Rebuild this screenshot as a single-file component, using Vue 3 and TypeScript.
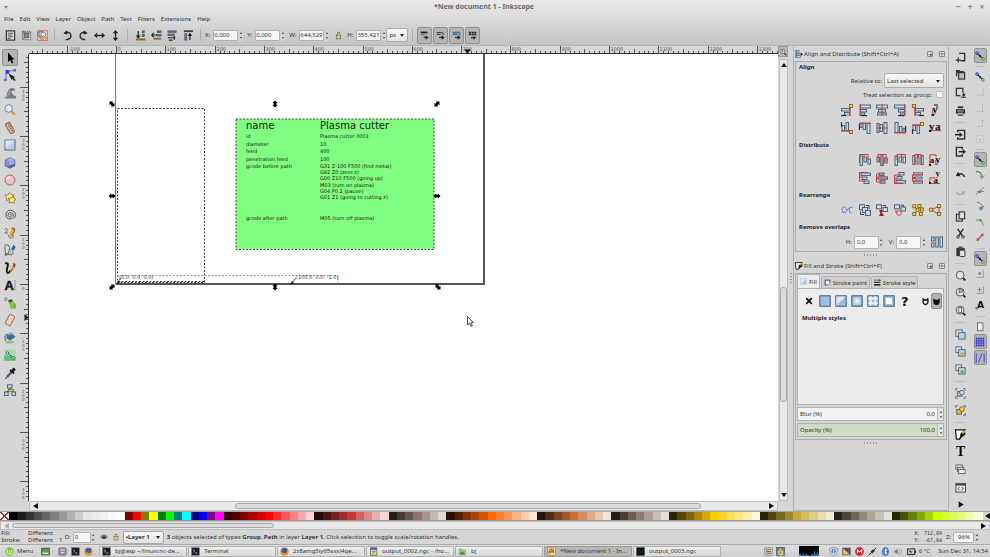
<script setup lang="ts">
import { h, ref } from 'vue'

/* ---- drawing helpers: every icon lives in a 12 x 12 box ---- */
const bar = (x: number, y: number, w: number, ht: number, fill = '#c3dbef') =>
  `<rect x="${x}" y="${y}" width="${w}" height="${ht}" fill="${fill}" stroke="#435869" stroke-width=".9"/>`
const red = (d: string) => `<path d="${d}" fill="none" stroke="#d8343c" stroke-width="1"/>`
const line = (d: string, color = '#2c2f31', width = 1.2) =>
  `<path d="${d}" fill="none" stroke="${color}" stroke-width="${width}"/>`
const solid = (d: string, color = '#1c1e20') => `<path d="${d}" fill="${color}"/>`
const gold = (x: number, y: number) =>
  `<rect x="${x}" y="${y}" width="3" height="3" fill="#ffd83a" stroke="#6d5612" stroke-width=".8"/>`
const turn = (deg: number, body: string) => `<g transform="rotate(${deg} 6 6)">${body}</g>`
const flip = (body: string) => `<g transform="matrix(-1 0 0 1 12 0)">${body}</g>`
const glyph = (x: number, y: number, size: number, s: string) =>
  `<text x="${x}" y="${y}" font-family="Liberation Serif, serif" font-weight="bold" font-size="${size}" fill="#111">${s}</text>`
const dot = (x: number, y: number, r: number, fill: string, stroke = 'none') =>
  `<circle cx="${x}" cy="${y}" r="${r}" fill="${fill}" stroke="${stroke}" stroke-width=".9"/>`

const anchorEdge = bar(0.5, 4.5, 8, 2.5) + bar(3.5, 8.5, 5, 2.5) + line('M0 11.5H5') + red('M9.2 2V12') + gold(8.5, 0.5)
const leftEdge = bar(1.5, 1, 10, 3) + bar(1.5, 5.5, 6, 2.5) + bar(1.5, 9, 4, 2) + red('M1 0V12') + line('M2 11.6H8')
const centreEdge = bar(0.5, 1, 11, 3) + bar(2.5, 5.5, 7, 2.5) + bar(1.5, 9, 9, 2) + red('M6 0V12')
const distA = bar(1, 2, 2.5, 9.5) + bar(5, 3, 2.5, 5) + bar(9, 5, 2.5, 5) + red('M0.5 9V.5H9V6M5 .5V3')
const distB = bar(1, 3, 2.5, 5) + bar(4.8, 2, 2.5, 9.5) + bar(8.7, 4, 2.5, 5) + red('M2 8V.5H10V8M6 .5V11')
const distC = bar(1, 2, 2.5, 9.5) + bar(5, 3, 2.5, 5) + bar(9, 3, 2.5, 6) + red('M3 6V.5H11.5V7M7.5 .5V5')
const distD = bar(0.8, 1.5, 2, 9) + bar(5, 3, 2, 7) + bar(9.2, 1.5, 2, 9) + red('M3 11V.5H9V11M5.5 .5V4M6.5 .5V4')
const link = line('M3 3L9 9', '#333', 1.4) + dot(2.5, 2.5, 1.7, '#7d86ff', '#2630d6') + dot(9.5, 9.5, 1.7, '#9fdcaa', '#278543') + dot(6, 6, 1.3, '#222')
const swatchBox = (inner: string) => `<rect x=".8" y=".8" width="10.4" height="10.4" fill="#9dbede" stroke="#3d5e7e"/>${inner}`
const magnifier = (inner: string) => line('M8.3 8.3L11.3 11.3', '#222', 2) + dot(5.6, 5.6, 4.3, '#dceaf5', '#38424a') + inner
const terminal = `<rect x="1" y="1" width="10" height="10" fill="#1d1d2a" stroke="#555" stroke-width=".6"/>` + line('M3 3.5L5 5.2L3 7M5.5 8H8.5', '#ddd', 1)
const fox = dot(6, 6, 5.4, '#e57b12') + dot(6, 4.8, 3.5, '#2b5fb0') + solid('M1 4C2 8 5 7 6 8.5C9 8 10 6 10 3C12 8 10 11 6 11.4C2 11 0 8 1 4Z', '#f3921c')

const icons: Record<string, string> = {
  // selection commands
  layers: `<rect x="1.5" y="1" width="9" height="10" fill="#e8e8e8" stroke="#333" stroke-width="1.3"/>` + line('M3 3.5H9M3 5.5H8M3 7.5H9M3 9.2H6', '#333', 0.9),
  all: `<rect x="1.5" y="1.5" width="9" height="9" fill="#ddd" stroke="#555" stroke-dasharray="1.5 1"/>` + bar(4, 3.5, 4.5, 5, '#888') + line('M1 3H11M3.2 1V11', '#666', 0.8),
  deselect: `<rect x=".8" y=".8" width="10.4" height="10.4" fill="#efdada" stroke="#dc5b5b" stroke-width="1"/>` + bar(2, 2, 5, 5, '#b5d1ea') + dot(7, 5, 2.5, '#edf4f8', '#777') + dot(5, 8.4, 1.8, '#f1b534', '#9b7721') + line('M8.7 7.5L10.5 10', '#c98a2a', 1.3),
  ccw: line('M4 10.5C8 11 10.5 8 9.5 5C8.5 2.5 6 2 3 3.2', '#2b2b2b', 1.5) + solid('M5.2 .5L1.5 3.7L6 5Z'),
  cw: line('M8 10.5C4 11 1.5 8 2.5 5C3.5 2.5 6 2 9 3.2', '#2b2b2b', 1.5) + solid('M6.8 .5L10.5 3.7L6 5Z'),
  fliph: line('M2 6H10', '#222', 1.4) + solid('M0 6L3.5 3V9ZM12 6L8.5 3V9Z'),
  flipv: line('M6 2V10', '#222', 1.4) + solid('M6 0L3 3.5H9ZM6 12L3 8.5H9Z'),
  bottom: line('M3.5 1V8', '#222', 1.3) + solid('M1 6L3.5 9.5L6 6Z') + bar(8, 1, 2, 2, '#777') + bar(8, 5, 2, 2, '#777') + line('M1 10.3H11.5', '#8a6a24', 2.2),
  lower: line('M5 5.5H1M3 3L.8 5.5L3 8', '#222', 1.2) + bar(7, 1, 4, 1.6, '#777') + bar(5.5, 5, 5.5, 1.5, '#777') + line('M3 9.5H11', '#8a6a24', 2),
  raise: bar(1, 1, 9, 1.5, '#777') + bar(1, 4.5, 7, 1.5, '#777') + line('M1 8.5H6M9 8.5H5M8 6.5V10.5M2 11H6', '#222', 1.2),
  top: line('M1 1.3H11', '#3b3b3b', 2) + bar(2, 4, 2, 7, '#777') + line('M7.5 4V11', '#222', 1.4) + solid('M5 6.5L7.5 3L10 6.5Z'),
  lock: `<rect x="3" y="5.5" width="6" height="5" fill="#e8cf6a" stroke="#555" stroke-width=".8"/>` + line('M4.5 5.5V3.5C4.5 1.5 8 1.2 8.2 3.5', '#555', 1.2),
  scaleStroke: line('M1 2H10', '#222', 2.4) + line('M1 5H6', '#555', 1.2) + line('M5 8.5H10', '#222', 1.5) + solid('M7.5 5.5L11.5 8.5L7.5 11.5Z'),
  scaleCorner: line('M1 2H7Q10 2 10 5M1 4.5H6', '#444', 1.5) + line('M4 8.5H9', '#222', 1.5) + solid('M7.5 5.5L11.5 8.5L7.5 11.5Z'),
  scaleGrad: line('M1 2H10V6M1 4.5H7', '#3c6b9c', 1.8) + line('M4 8.5H9', '#222', 1.5) + solid('M7.5 5.5L11.5 8.5L7.5 11.5Z'),
  scalePattern: line('M1 2H11M1 4.6H11', '#222', 2.2).replace('/>', ' stroke-dasharray="3 .7"/>') + line('M4 9H9', '#222', 1.5) + solid('M7.5 6.3L11 9L7.5 11.7Z'),

  // toolbox
  select: solid('M4 .5V10L6.2 8L7.7 11.5L9.3 10.7L7.8 7.5H10.5Z', '#000'),
  node: line('M2 11V5Q2 1.5 11 1.5', '#777', 1) + `<rect x="0" y="9.5" width="2.6" height="2.6" fill="#5b64ff"/><rect x="9.4" y="0" width="2.6" height="2.6" fill="#5b64ff"/><rect x="1.5" y="1" width="3.8" height="3.8" fill="#2f3cf0"/>` + solid('M4.5 4.5L11 8L9.5 8.8L11.7 11L10.6 12L8.5 9.9L7.5 11Z'),
  tweak: solid('M0 11.5Q3 9 3.5 5Q5 .5 9.5 1.2Q11.5 2 11 4.5Q9 2.5 7.5 4.5Q7.5 7.5 12 9.5V11.5Z', '#777a7c') + line('M1 10Q5 10 6 3', '#b8bcbe', 1),
  zoom: line('M7.5 7.5L11 11', '#e8a120', 2.4) + dot(4.7, 4.5, 3.8, '#d6e9f8', '#6c7d8b') + line('M2.5 4Q3 2.2 5 2', '#fff', 1),
  measure: `<g transform="rotate(-30 6 6)"><rect x="3.5" y=".5" width="5" height="11" rx="1" fill="#d8ac98" stroke="#7d5c4e" stroke-width=".9"/></g>` + line('M4 3L5.5 2.3M5 5L7 4M6 7L7.5 6.3M7 9L9 8', '#6a4638', 0.8),
  rect: `<rect x="1" y="1" width="10" height="10" fill="#b9d2ea" stroke="#5b6d7e"/>` + solid('M1.6 1.6H10.4L1.6 9Z', '#d9e8f5'),
  box: solid('M6 .3L11.2 2.8V9L6 11.8L.8 9V2.8Z', '#5c60a8') + solid('M6 .9L10.6 3L6.5 5.2L1.4 3Z', '#b9bce8') + solid('M1.4 3.3L4.5 2V9.2L1.4 8.8Z', '#8b90d2') + solid('M4.7 2L10.4 3.5V7L4.7 8.6Z', '#a6aaea'),
  ellipse: dot(6, 6, 5, '#f9bcc4', '#8d6468') + solid('M2 6A4 4 0 0 1 8 2.6Q5 5 2 6Z', '#fcdde0'),
  star: `<path d="M1 3L4 3L5.5 .5L7 2.5L10 3L8.5 5.5L9 8L5.5 7.5L2.5 8.5L2.5 5.5Z" fill="#f3ea9a" stroke="#7d7535" stroke-width=".8"/><path d="M4.5 6L7.5 6L9 3.8L9.8 6.3L12 7.3L10 8.8L10 11.5L7.5 10L5 11L5.5 8.5Z" fill="#fdeb62" stroke="#7d7535" stroke-width=".8"/>`,
  spiral: line('M6 6Q7 5 7.5 6.2Q7.3 8.3 5.2 7.8Q3.2 6.5 4.5 4.4Q6.8 2.6 9 4.7Q10.5 8 7.5 9.8Q3.8 10.8 2 7.5Q1 3.5 4.5 1.5Q9 .2 11.2 4Q11.8 7 10.5 9.5', '#54585b', 1),
  pencil: line('M.5 2.5Q3 .5 3.5 2.5Q3.5 4 .8 6H4M4 8Q5 11.5 7.5 11.3Q10 11 9 8', '#666', 0.9) + solid('M8 1L11 2.5L7.5 9.5L5 10.5L5.2 8Z', '#f0a82a') + line('M8 1L11 2.5', '#d04a2a', 1.6) + line('M11 3L7.8 9', '#6a4a12', 0.8),
  pen: line('M.5 1H4Q7 2 4 10H1.5L.8 2.5M4 10.5Q8 12 10 9', '#555', 0.9) + dot(2, 10.5, 1, '#eee', '#444') + solid('M9.5 .8L11.8 3L8.5 8.5L5.8 10L6.5 6Z', '#3e6c9e') + solid('M7 5L9 7L5.5 10.5Z', '#e3d3a0'),
  calligraphy: line('M1 1.5Q5 0 3.5 5Q2 10 3.5 10.8Q5 11.5 7 8', '#111', 2) + solid('M9.5 .5L11.8 2.5L10.3 6L8.5 5Z', '#b43a20') + solid('M7 4L10.5 6L9.5 9L5.8 11Z', '#e8c255') + line('M9 6.5L6 10.5', '#222', 0.8),
  text: `<text x="0.5" y="10.5" font-family="Liberation Sans, sans-serif" font-weight="bold" font-size="13" fill="#16181a" stroke="#16181a" stroke-width=".5">A</text>` + line('M11 1V11', '#777', 0.7),
  spray: solid('M5 5L8.5 3L11.8 7.5V11.5H6.5Z', '#6bb028') + line('M7 5.5V10.5M9 5V11', '#a9dd74', 0.9) + solid('M4 3.5L7.5 2L8.5 4L5 5.5Z', '#444') + dot(1, 1.2, 0.7, '#555') + dot(3, 1, 0.6, '#555') + dot(1, 3.4, 0.7, '#555') + dot(2.6, 2.7, 0.6, '#555'),
  eraser: `<g transform="rotate(28 6 6)"><rect x="3.2" y=".8" width="5.6" height="10.4" rx=".8" fill="#f3cdb9" stroke="#8a6e62" stroke-width=".9"/></g>`,
  bucket: solid('M1 10Q6 7.5 11 10Q9 12 5 11.8Q1.5 11.5 1 10Z', '#7cc09a') + solid('M3 2L8 .5L11.5 5L6 8.5L2.5 6.5Z', '#3a6d95') + line('M2.8 2Q0 4 1.5 9', '#555', 1) + line('M4 2.5L9 1.5L10.5 4', '#9cc4df', 1.2),
  gradient: `<rect x=".3" y=".3" width="11.4" height="11.4" fill="#a7dcae"/>` + solid('M.3 11.7V6L11.7 8V11.7Z', '#66bb78') + line('M4 4.5L9 8.5', '#355', 0.9) + dot(3.5, 4, 1.3, '#e6f5e8', '#466') + dot(9.2, 8.8, 1.3, '#e6f5e8', '#466'),
  dropper: line('M8.5 4L3 10', '#4b5f75', 2.4) + line('M3 10L1.2 12', '#333', 1) + line('M6 3L10 6.5', '#111', 1.8) + line('M8.5 4L10.7 1.5', '#111', 3),
  connector: line('M6 4V6.5M2.5 8L5 6.5M9.5 8L7 6.5', '#444', 1.1) + bar(3.5, 0.8, 4.5, 3.2) + bar(0.5, 8, 3.6, 3.4) + bar(8, 8, 3.6, 3.4) + `<rect x="4.5" y="5.4" width="5" height="1.8" fill="#f7d53c" stroke="#6a5a14" stroke-width=".6"/>`,

  // align and distribute
  a1: anchorEdge, a2: leftEdge, a3: centreEdge, a4: flip(leftEdge), a5: flip(anchorEdge),
  a6: line('M5 1H8V4', '#456', 1.4) + glyph(3.2, 8.5, 11, 'y') + red('M3.8 5V12') + solid('M2.5 10.2H5V12H2.5Z'),
  b1: turn(90, anchorEdge), b2: turn(90, leftEdge), b3: turn(90, centreEdge), b4: turn(-90, leftEdge), b5: turn(90, flip(anchorEdge)),
  b6: glyph(0, 8, 11, 'y') + glyph(6, 8, 11, 'a') + red('M0 8.6H12') + solid('M0 7.8H2V10H0Z'),
  d1: distA, d2: distB, d3: distC, d4: distD, d5: glyph(0.8, 8.5, 9, 'a') + glyph(6.3, 8.5, 10, 'y') + red('M.8 11V.8H7V3M6.8 6V11') + solid('M0 10H2V12H0Z'),
  e1: turn(-90, flip(distA)), e2: turn(-90, flip(distB)), e3: turn(-90, distA), e4: turn(-90, distD), e5: glyph(6.5, 4, 9, 'y') + glyph(4.5, 11, 9, 'a') + red('M6 5.8H.8V11.5H11') + solid('M0 10H2V12H0Z'),
  r1: line('M6 6L3.5 2.5L.8 4.5L1.8 8.5H4.5L6 6L8 4L8.5 8L11 9.5M8 4L11.5 3', '#6c80cc', 1),
  r2: bar(0.5, 0.8, 5, 5) + bar(3.5, 3.5, 5, 5) + bar(6.5, 6.5, 5, 5) + line('M7 1.5H10V5M1.5 7.5V10.5H5', '#444', 1),
  r3: bar(0.5, 0.8, 5, 4) + bar(7, 3.5, 4.5, 4) + line('M6.5 1.5H9.5V3', '#444', 1) + solid('M3 6H7L6 8.5L8 12H3L4.5 9Z', '#96202a'),
  r4: bar(0.5, 0.8, 5, 4) + bar(7, 3, 4.5, 4) + line('M6.5 1.2H9.5V3', '#444', 1) + dot(5, 9, 2.3, 'none', '#d8343c') + red('M2 6V9'),
  r5: gold(0.8, 0.8) + gold(6, 0.5) + gold(4, 4.3) + gold(8.5, 4) + gold(0.8, 8.5) + gold(7.3, 8.5),
  r6: red('M2.5 6L10 2M2.5 6L10 10.5M10 2V10') + gold(0.6, 4.2) + gold(8.4, 0.6) + gold(8.4, 8.4),
  overlap: bar(0.6, 1, 2.5, 4) + bar(0.6, 7, 2.5, 4) + bar(4.8, 1, 2.5, 10) + bar(9, 0.8, 2.5, 10.4),
  alignTitle: red('M1 0V12') + bar(2, 1, 4, 3) + bar(2, 5, 7, 2.5) + bar(2, 8.5, 6, 2.5) + solid('M9 4L12 6.2L9 8.5Z'),
  fillTitle: `<path d="M.5 1H11L5 11H1.5Z" fill="#fff" stroke="#111" stroke-width="1.3"/>` + solid('M6 5L10.5 1L11.5 6L5 11Z', '#111') + line('M8 5L11.5 1.5', '#e6a82c', 2),

  // paint kinds
  none: line('M3.2 3.2L8.8 8.8M8.8 3.2L3.2 8.8', '#111', 1.7),
  flat: swatchBox(''),
  linear: swatchBox(solid('M1.4 1.4H10.6L1.4 10.6Z', '#dce8f4')),
  radial: swatchBox(dot(6, 6, 3.8, '#c3d8ec') + dot(6, 6, 1.8, '#edf4fa')),
  pattern: swatchBox(line('M3.5 1.2V10.8M8.5 1.2V10.8M1.2 3.5H10.8M1.2 8.5H10.8', '#eef5fb', 2)),
  paintbox: swatchBox(`<rect x="3" y="3" width="6" height="6" fill="#fdfdfd"/>`),
  unknown: `<text x="2" y="10.5" font-family="DejaVu Sans, sans-serif" font-weight="bold" font-size="13" fill="#111">?</text>`,
  evenodd: `<path d="M3 2.5L4.5 4H7.5L9 2.5Q10.5 10 6 10Q1.5 10 3 2.5Z" fill="none" stroke="#111" stroke-width="1.8"/>`,
  nonzero: solid('M2 1.5L4.5 3.5H7.5L10 1.5Q12 10.7 6 10.7Q0 10.7 2 1.5Z', '#111'),
  tabFill: bar(1, 1, 10, 10, '#a9c8e6').replace('#435869', '#b7cde2') + solid('M1.5 1.5H10.5L1.5 10.5Z', '#dbe7f3'),
  tabPaint: `<rect x="2" y="2" width="8" height="8" fill="#f4f4f4" stroke="#567" stroke-width="2"/>` + line('M6 10H10V6', '#ccc', 2.4),
  tabStyle: line('M0 2H11', '#222', 1) + line('M0 5.7H11', '#222', 1.8) + line('M0 10H11', '#222', 2.6) + solid('M9 .5L12 2L9 3.5Z'),

  // commands
  newdoc: line('M4.5 1.5H10.5V9.5H6', '#333', 1.5) + line('M3.5 6V11.5M.8 8.8H6.2', '#333', 1.3),
  open: `<rect x="4" y="4" width="6.5" height="7" fill="#bbb" stroke="#333" stroke-width="1.3"/>` + solid('M1 1H5L6 2.3H10V4H2.5V8H1Z', '#333'),
  save: line('M6 9.5H1.5V1.5H8.5V6', '#333', 1.4) + line('M9.5 6V10M6.5 11.2H12', '#333', 1.3) + solid('M7.5 8H11.5L9.5 10.8Z'),
  print: solid('M1 4.5H11V9.5H1Z', '#333') + line('M3 2.5H9', '#333', 2) + line('M2.5 6.5H9.5M3 9H9', '#ccc', 1) + line('M3 11H9', '#333', 1.4),
  import: line('M3 3.5V1.5H10.5V11H3V9', '#333', 1.6) + line('M0 6.2H6', '#222', 1.6) + solid('M5 3.5L8.5 6.2L5 9Z'),
  export: line('M8 3.5V1.5H1.5V11H8V9', '#333', 1.6) + line('M4 6.2H9', '#222', 1.6) + solid('M8.5 3.5L12 6.2L8.5 9Z'),
  undo: line('M3 5.5Q8 2 10.5 7.5', '#333', 1.7) + solid('M1 6.5L3.2 2L6 6.8Z'),
  redo: line('M1.5 6Q4 9.5 9 7', '#a9a9a9', 1.5) + solid('M6.5 5L11 4.5L10 9Z', '#a9a9a9'),
  copy: `<rect x="1.5" y="3.5" width="6.5" height="7.5" fill="#ccc" stroke="#333" stroke-width="1.2"/><rect x="4.5" y="1" width="6" height="7.5" fill="#dedede" stroke="#333" stroke-width="1.2"/>`,
  cut: line('M3 1L8 8.5M9 1L4 8.5', '#222', 1.4) + dot(3.2, 9.7, 1.4, 'none', '#222') + dot(8.8, 9.7, 1.4, 'none', '#222'),
  paste: solid('M1.5 2H10.5V11H1.5Z', '#333') + solid('M4 .5H8V3H4Z', '#555') + `<rect x="5" y="4.5" width="5.8" height="7" rx=".8" fill="#e2e2e2" stroke="#333"/>`,
  zsel: magnifier(''),
  zdraw: magnifier(dot(4.5, 6, 1.7, '#e8bd4e') + bar(5, 3, 3, 2.5)),
  zpage: magnifier(bar(4.2, 3, 3, 5, '#fff')),
  dup: bar(1, 1, 7, 7, '#dce6ee') + bar(4, 4, 7, 7, '#bcd3e6'),
  clone: bar(1, 1, 6, 6, '#dce6ee') + bar(4, 4, 7, 7, '#bcd3e6') + solid('M6 7H9.5V10H6Z', '#d8a93a'),
  unlink: bar(1, 1, 6, 6, '#dce6ee') + bar(4, 4, 7, 7, '#bcd3e6') + solid('M6 7H9.5V10H6Z', '#7aa14e'),
  group: bar(2.5, 4, 5, 5, '#a9c4dc') + dot(7.5, 5, 2.5, '#c9dcec', '#435869') + line('M.8 3V.8H3M9 .8H11.2V3M11.2 9V11.2H9M3 11.2H.8V9', '#666', 1),
  ungroup: bar(2, 5, 5, 5, '#edbd3c') + dot(7.5, 4.5, 2.6, '#f6cf52', '#775a15') + line('M.8 3V.8H3M9 .8H11.2V3M11.2 9V11.2H9', '#555', 1),
  textcmd: glyph(1, 11, 15, 'T'),
  layerscmd: bar(1, 1, 7, 4.5, '#e4e4e4') + bar(2.5, 3.5, 7, 4.5, '#d0d0d0') + bar(4, 6, 7, 4.5, '#f0f0f0'),
  xml: `<rect x="1" y="1.5" width="10.5" height="9.5" fill="#e8e8e8" stroke="#444"/>` + line('M1 3H11.5', '#444', 1.8) + line('M5 5.5L3.4 7.2L5 9M7.5 5.5L9.1 7.2L7.5 9', '#333', 0.9),
  more: solid('M4 2.5L9.5 6L4 9.5Z', '#111'),

  // snapping
  snap: link,
  snapBox: link,
  faint1: line('M10 1V10H2', '#bdbdbd', 1),
  faint2: line('M9 1V10H2', '#bdbdbd', 1) + dot(9, 10, 1.1, '#aaa'),
  faint3: line('M9 3V10H2', '#bdbdbd', 1) + dot(9, 3, 1.1, '#aaa'),
  faint5: `<rect x="2" y="2" width="8.5" height="8.5" fill="none" stroke="#c4c4c4"/>` + dot(6, 7, 1.1, '#aaa'),
  path1: line('M1 2Q8 1 8.5 9', '#3e9a4c', 1.4) + line('M5.5 7.5L8.5 10L11 6.5', '#3e9a4c', 1.2),
  path2: line('M1 10Q6 7 11 1.5M2 6.5H11', '#777', 1) + dot(6, 6.8, 1.6, '#3e9a4c'),
  path3: line('M2 1.5Q9 2 9.5 9', '#6e8e74', 1.2) + dot(7, 9, 1.6, '#8fa8e8', '#3c5fa8') + line('M7 9L11 6', '#777', 1),
  path4: line('M1 4Q8 1 10 10', '#6e8e74', 1.2) + dot(6.5, 4, 1.7, '#3e9a4c'),
  path5: line('M2 10.5L10.5 1.5', '#8b8b8b', 1.2) + dot(3.5, 9, 1.7, '#d04848') + dot(8.5, 3.8, 1.7, '#d04848') + dot(6, 6.5, 1.2, '#d04848'),
  other1: line('M10 1V10H2', '#999', 1) + dot(5.5, 5.5, 1.5, '#3e9a4c'),
  other2: line('M10 2V10H2', '#888', 1) + line('M5.5 3V8M3 5.5H8', '#777', 1),
  other3: `<text x="2.5" y="10" font-family="DejaVu Sans, sans-serif" font-weight="bold" font-size="11" fill="#111">A</text>` + dot(2, 10, 1.6, '#3e9a4c'),
  pageSnap: `<rect x="3" y="1" width="6.5" height="9.5" fill="#f2f2f2" stroke="#555"/>`,
  grid: line('M2 .5V11.5M4.7 .5V11.5M7.4 .5V11.5M10.1 .5V11.5M.5 2H11.5M.5 4.7H11.5M.5 7.4H11.5M.5 10.1H11.5', '#3a3ae6', 1.1),
  guide: line('M1.5 .5V11.5M11 .5V11.5M4 11.5L8.5 .5', '#3a3ae6', 1.1),

  // desktop panel
  mint: dot(6, 6, 5.6, '#86be43') + line('M3 3V7.5Q3 9 4.5 9H8Q9 9 9 7.5V5.5Q9 4.5 8 4.5M6 7.5V5.5Q6 4.5 7 4.5', '#fff', 1.1),
  desktop: `<rect x="1" y="1.5" width="10" height="9" fill="#5f9a46" stroke="#333"/>` + line('M2 8.5H10', '#eee', 1.8),
  files: `<rect x="1" y="1" width="10" height="10" rx="1.4" fill="#8f9396" stroke="#555" stroke-width=".7"/>` + line('M3 4H9M4 7.5H8', '#eee', 1.3),
  terminal, fox,
  editor: bar(2, 1, 8.5, 10, '#ecd978') + solid('M2 1H10.5V4H2Z', '#4a73a8') + line('M4 6H9M4 8H8', '#665', 0.9),
  folder: solid('M1 2H5L6 3.2H11V11H1Z', '#9dbb83') + solid('M3 8L6 5.5L9.5 10H2.5Z', '#5f8a42'),
  ink: `<rect x=".6" y=".6" width="10.8" height="10.8" rx="1" fill="#efd28a" stroke="#a17c2c" stroke-width=".8"/>` + line('M3 9Q2 4 6 3Q10 4 8 8M5 8Q5 5 7.5 6', '#925f12', 1.4),
  ngc: `<rect x=".5" y=".5" width="11" height="11" fill="#0c0f10"/>` + line('M2 9L5 4L7 8L10 3', '#38424a', 0.8),
  calc: bar(1, 1, 10, 10, '#c8c9c0').replace('#435869', '#888') + line('M2.5 3.2H9.5', '#c85c3c', 1.2) + line('M3 6H9M3 8.5H9', '#666', 1.3),
  cup: bar(0.6, 0.6, 10.8, 10.8, '#4e7fc0') + solid('M2.5 5H9.5V11H3.5Z', '#f4d46a') + dot(6, 3.6, 2, '#f4d46a', '#836216') + dot(6, 7.8, 1.2, '#836216'),
  shield: `<path d="M6 .5L11.2 2Q11.5 9 6 11.6Q.5 9 .8 2Z" fill="#dfe6ea" stroke="#778"/>` + dot(6, 5.6, 2.8, '#3c7fc4') + line('M6 4V7.4', '#fff', 1.1),
  meter: solid('M.5 1H11.5V11H.5Z', '#4f5254') + solid('M1.5 2V10H10.5Z', '#e6c34a'),
  mega: dot(6, 6, 5.8, '#dd1420') + line('M3.2 8.5V3.8L6 6.8L8.8 3.8V8.5', '#fff', 1.4),
  plug: line('M1 11L5 7', '#222', 1.3) + line('M4.5 7.5L8 4', '#222', 3.2) + line('M8 4L11 1', '#222', 1.3),
  blue: `<ellipse cx="6" cy="6" rx="4.5" ry="5.8" fill="#3673bd"/>` + line('M3.6 4L8.2 8L6 10V2L8.2 4L3.6 8', '#fff', 1),
  sound: solid('M.5 4.5H2.5L5 2V10L2.5 7.5H.5Z', '#777') + line('M6.8 3.5Q8.2 6 6.8 8.5M8.8 2Q11.2 6 8.8 10', '#999', 1),
  battery: `<rect x=".8" y="2.5" width="9.4" height="7.5" fill="none" stroke="#333" stroke-width="1.4"/>` + solid('M3 4.5H6L5 6H8L4 9L5 6.8H3ZM10.5 4.5H12V8H10.5Z', '#333'),
  zoomfit: line('M8 8L11 11', '#333', 1.8) + dot(5, 5, 3.6, '#ddd', '#444') + line('M5 3V7M4 4L5 3', '#333', 1),
  eye: line('M.8 6.5Q6 1 11.2 6.5Q6 11 .8 6.5Z', '#444', 1.2) + dot(6, 6.3, 2.3, '#333') + line('M2 3.5L3 5M6 2V3.5M10 3.5L9 5', '#444', 0.9),
}

const Icon = (props: { name: string }) =>
  h('svg', { viewBox: '0 0 12 12', class: 'icon', 'aria-hidden': 'true', innerHTML: icons[props.name] ?? '' })
Icon.props = ['name']

const menus = ['File', 'Edit', 'View', 'Layer', 'Object', 'Path', 'Text', 'Filters', 'Extensions', 'Help']
const commandGroups = [
  ['layers', 'all', 'deselect'],
  ['ccw', 'cw', 'fliph', 'flipv'],
  ['bottom', 'lower', 'raise', 'top'],
]
const coords = ref({ x: '0,000', y: '0,000', w: '644,529', h: '355,421' })
const toggles = ['scaleStroke', 'scaleCorner', 'scaleGrad', 'scalePattern']
const tools = ['select', 'node', 'tweak', 'zoom', 'measure', 'rect', 'box', 'ellipse', 'star', 'spiral', 'pencil', 'pen', 'calligraphy', 'text', 'spray', 'eraser', 'bucket', 'gradient', 'dropper', 'connector']
const alignButtons = ['a1', 'a2', 'a3', 'a4', 'a5', 'a6', 'b1', 'b2', 'b3', 'b4', 'b5', 'b6']
const distributeButtons = ['', 'd1', 'd2', 'd3', 'd4', 'd5', '', 'e1', 'e2', 'e3', 'e4', 'e5']
const rearrangeButtons = ['r1', 'r2', 'r3', 'r4', 'r5', 'r6']
const paints = ['none', 'flat', 'linear', 'radial', 'pattern', 'paintbox', 'unknown']
const commands = [
  ['newdoc', 'open', 'save', 'print'], ['import', 'export'], ['undo', 'redo'], ['copy', 'cut', 'paste'],
  ['zsel', 'zdraw', 'zpage'], ['dup', 'clone', 'unlink'], ['group', 'ungroup'], ['fillTitle', 'textcmd', 'layerscmd', 'xml', 'more'],
]
const snaps = [
  ['snap'], ['snapBox', 'faint1', 'faint2', 'faint3', 'faint5'],
  ['snap', 'path1', 'path2', 'path3', 'path4', 'path5'], ['snap', 'other1', 'other2', 'other3'], ['pageSnap', 'grid', 'guide'],
]
const pressedSnaps = ['snap', 'grid', 'guide']

/* ---- rulers: 100 units span 49.3 px ---- */
const unit = 4.93
const range = (from: number, to: number) => Array.from({ length: to - from + 1 }, (_, i) => i + from)
const originX = 87
const originY = 230
const hTicks = range(-17, 134).map((n) => ({ n, at: Math.round(originX + n * unit) + 0.5 }))
const vTicks = range(-46, 44).map((n) => ({ n, at: Math.round(originY + n * unit) + 0.5 }))
const hLabels = hTicks.filter((t) => t.n % 10 === 0)
const vLabels = vTicks.filter((t) => t.n % 10 === 0)
const tick = (n: number) => (n % 10 === 0 ? 8 : n % 5 === 0 ? 4 : 2)
const vDigits = (n: number) => String(n > 0 ? -n * 10 : Math.abs(n) * 10).split('')

/* ---- drawing on the canvas ---- */
const rows: [number, string, string][] = [
  [138, 'id', 'Plasma cutter 0001'], [146, 'diameter', '10'], [153, 'feed', '400'], [161, 'penetration feed', '100'],
  [168, 'gcode before path', 'G31 Z-100 F500 (find metal)'], [174, '', 'G92 Z0 (zero z)'], [180, '', 'G00 Z10 F500 (going up)'],
  [187, '', 'M03 (turn on plasma)'], [193, '', 'G04 P0.2 (pause)'], [199, '', 'G01 Z1 (going to cutting z)'],
  [220, 'gcode after path', 'M05 (turn off plasma)'],
]
const handles = [
  { x: 112, y: 104, a: 45 }, { x: 275, y: 104, a: 90 }, { x: 437, y: 104, a: -45 }, { x: 112, y: 196, a: 0 },
  { x: 437, y: 196, a: 0 }, { x: 112, y: 287, a: -45 }, { x: 275, y: 287, a: 90 }, { x: 438, y: 287, a: 45 },
]

const palette = (
  '000000 1a1a1a 333333 4d4d4d 666666 808080 999999 b3b3b3 cccccc e6e6e6 ececec f2f2f2 f9f9f9 ffffff ' +
  '800000 ff0000 808000 ffff00 008000 00ff00 008080 00ffff 000080 0000ff 800080 ff00ff ' +
  '2b0000 550000 800000 aa0000 d40000 ff0000 ff2a2a ff5555 ff8080 ffaaaa ffd5d5 ' +
  '280b0b 501616 782121 a02c2c c83737 d35f5f de8787 e9afaf f4d7d7 241c1c 483737 6c5353 916f6f ac9393 c8b7b7 e3dbdb ' +
  '2b1100 552200 803300 aa4400 d45500 ff6600 ff7f2a ff9955 ffb380 ffccaa ffe6d5 ' +
  '28170b 502d16 784421 a05a2c c87137 d38d5f deaa87 e9c6af f4e3d7 241f1c 483e37 6c5d53 917c6f ac9d93 c8beb7 e3dedb ' +
  '2b2200 554400 806600 aa8800 d4aa00 ffcc00 ffd42a ffdd55 ffe680 ffeeaa fff6d5 ' +
  '28220b 504416 786721 a0892c c8ab37 d3bc5f decd87 e9ddaf f4eed7 24221c 484537 6c6753 918a6f aca793 c8c4b7 e3e2db ' +
  '222b00 445500 668000 88aa00 aad400 ccff00 d4ff2a ddff55 e5ff80 eeffaa f6ffd5'
).split(' ').map((c) => '#' + c)

const tasks = [
  { icon: 'terminal', label: 'bj@asp ~/linuxcnc-de...' }, { icon: 'terminal', label: 'Terminal' },
  { icon: 'fox', label: '2z8amg5iy65sxxi4qe...' }, { icon: 'editor', label: 'output_0002.ngc - /ho...' },
  { icon: 'folder', label: 'bj' }, { icon: 'ink', label: '*New document 1 - In...', active: true },
  { icon: 'ngc', label: 'output_0003.ngc' },
]
const tray = ['shield', 'meter', 'mega', 'plug', 'blue', 'sound', 'battery']
</script>

<template>
  <div class="window">
    <header class="top">
      <div class="titlebar">
        <span class="shade"></span>
        <h1>*New document 1 - Inkscape</h1>
        <div class="winbtns">
          <button aria-label="Minimize">−</button><button aria-label="Maximize">+</button><button aria-label="Close">×</button>
        </div>
      </div>
      <nav class="menubar"><button v-for="m in menus" :key="m">{{ m }}</button></nav>
      <div class="toolbar">
        <template v-for="(g, i) in commandGroups" :key="i">
          <div class="cmdgroup"><button v-for="n in g" :key="n" :aria-label="n"><Icon :name="n" /></button></div>
          <span class="vsep"></span>
        </template>
        <div class="spinfield"><label for="cx">X:</label><span class="spin"><input id="cx" v-model="coords.x" /><span class="steps"><button aria-label="Up"></button><button aria-label="Down"></button></span></span></div>
        <div class="spinfield"><label for="cy">Y:</label><span class="spin"><input id="cy" v-model="coords.y" /><span class="steps"><button aria-label="Up"></button><button aria-label="Down"></button></span></span></div>
        <div class="spinfield"><label for="cw">W:</label><span class="spin"><input id="cw" v-model="coords.w" /><span class="steps"><button aria-label="Up"></button><button aria-label="Down"></button></span></span></div>
        <button class="lock" aria-label="Lock ratio"><Icon name="lock" /></button>
        <div class="spinfield height"><label for="ch">H:</label><span class="spin"><input id="ch" v-model="coords.h" /><span class="steps"><button aria-label="Up"></button><button aria-label="Down"></button></span></span></div>
        <span class="pick units"><select aria-label="Units"><option>px</option></select></span>
        <span class="vsep"></span>
        <div class="toggles"><button v-for="t in toggles" :key="t" :aria-label="t" aria-pressed="true"><Icon :name="t" /></button></div>
      </div>
    </header>

    <main class="work">
      <aside class="toolbox">
        <button v-for="t in tools" :key="t" :aria-label="t" :class="{ on: t === 'select' }"><Icon :name="t" /></button>
      </aside>

      <section class="editor">
        <div class="hruler">
          <svg>
            <path v-for="t in hTicks" :key="t.n" :d="`M${t.at} 7V${7 - tick(t.n)}`" />
            <path class="edge" d="M0 7.5H3000" />
            <text v-for="t in hLabels" :key="t.n" :x="t.at + 1" y="5">{{ t.n * 10 }}</text>
            <path class="marker" d="M435 3.5H442L438.5 7.5Z" />
          </svg>
        </div>
        <button class="zoomfit" aria-label="Fit zoom"><Icon name="zoomfit" /></button>
        <div class="vruler">
          <svg>
            <path v-for="t in vTicks" :key="t.n" :d="`M8 ${t.at}H${8 - tick(t.n)}`" />
            <path class="edge" d="M8.5 0V3000" />
            <g v-for="t in vLabels" :key="t.n">
              <text v-for="(d, i) in vDigits(t.n)" :key="i" x="2" :y="t.at + 5 + i * 4">{{ d }}</text>
            </g>
            <path class="marker" d="M4.5 260V267L8.5 263.5Z" />
          </svg>
        </div>
        <div class="canvas">
          <svg>
            <g transform="translate(-29 -54)">
              <path d="M115.5 54V284" stroke="#777" />
              <path d="M484 54V285" stroke="#555" stroke-width="2" />
              <path d="M116 284H485" stroke="#555" stroke-width="2" />
              <rect class="dash" x="117.5" y="108.5" width="87" height="174" />
              <path class="dash" d="M118 281.5H204" />
              <path class="dash soft" d="M117 275.5H338V284" />
              <rect x="236" y="119" width="198" height="130" fill="#80ff80" />
              <rect class="dash" x="236" y="119" width="198" height="130.5" />
              <text class="big" x="246" y="129">name</text>
              <text class="big" x="320" y="129">Plasma cutter</text>
              <g v-for="r in rows" :key="r[0]">
                <text x="246" :y="r[0]">{{ r[1] }}</text>
                <text x="320" :y="r[0]">{{ r[2] }}</text>
              </g>
              <path d="M117 283L121 278M291 284L296 278" stroke="#222" stroke-width=".8" />
              <path d="M290.500 284.500L292 281L294 283ZM116.500 284L118 281L120 283Z" fill="#111" />
              <text class="note" x="119" y="279">(0.0; 0.0; 0.0)</text>
              <text class="note" x="296" y="279">(100.0; 0.0; -1.0)</text>
              <g v-for="(p, i) in handles" :key="i" :transform="`translate(${p.x} ${p.y}) rotate(${p.a})`">
                <path d="M-3.500 0L-1 -2.600V-1.500H1V-2.600L3.500 0L1 2.600V1.500H-1V2.600Z" fill="#000" />
              </g>
              <path d="M467.500 316.500V325L469.600 323.200L471 326.300L472.300 325.700L471 322.700H473.500Z" fill="#fff" stroke="#333" stroke-width=".9" />
            </g>
          </svg>
        </div>
        <div class="scroll vertical"><i class="arrow up"></i><span class="track"><span class="v1"></span><span class="thumb v2"></span><span class="v3"></span></span><i class="arrow down"></i></div>
        <div class="scroll horizontal"><i class="arrow left"></i><span class="track"><span class="h1"></span><span class="thumb h2"></span><span class="h3"></span></span><i class="arrow right"></i></div>
      </section>

      <div class="grip"><i></i></div>

      <aside class="dock">
        <section class="panel">
          <h2><Icon name="alignTitle" /><span>Align and Distribute (Shift+Ctrl+A)</span><button aria-label="Iconify">◂</button><button aria-label="Close">×</button></h2>
          <div class="body align">
            <h3>Align</h3>
            <div class="row relative"><label for="rel">Relative to:</label><span class="pick"><select id="rel"><option>Last selected</option></select></span></div>
            <label class="row treat">Treat selection as group: <input type="checkbox" /></label>
            <div class="iconset"><button v-for="n in alignButtons" :key="n" :aria-label="n"><Icon :name="n" /></button></div>
            <h3>Distribute</h3>
            <div class="iconset"><template v-for="(n, i) in distributeButtons" :key="i"><button v-if="n" :aria-label="n"><Icon :name="n" /></button><span v-else></span></template></div>
            <h3>Rearrange</h3>
            <div class="iconset"><button v-for="n in rearrangeButtons" :key="n" :aria-label="n"><Icon :name="n" /></button></div>
            <h3>Remove overlaps</h3>
            <div class="row overlaps">
              <div class="spinfield"><label for="oh">H:</label><span class="spin"><input id="oh" value="0,0" /><span class="steps"><button aria-label="Up"></button><button aria-label="Down"></button></span></span></div>
              <div class="spinfield"><label for="ov">V:</label><span class="spin"><input id="ov" value="0,0" /><span class="steps"><button aria-label="Up"></button><button aria-label="Down"></button></span></span></div>
              <button aria-label="Remove overlaps"><Icon name="overlap" /></button>
            </div>
          </div>
        </section>
        <div class="dots"><i></i></div>
        <section class="panel">
          <h2><Icon name="fillTitle" /><span>Fill and Stroke (Shift+Ctrl+F)</span><button aria-label="Iconify">◂</button><button aria-label="Close">×</button></h2>
          <div class="body fill">
            <div class="tabs" role="tablist">
              <button role="tab" class="on"><Icon name="tabFill" />Fill</button>
              <button role="tab"><Icon name="tabPaint" />Stroke paint</button>
              <button role="tab"><Icon name="tabStyle" />Stroke style</button>
            </div>
            <div class="page">
              <div class="paints">
                <button v-for="p in paints" :key="p" :aria-label="p"><Icon :name="p" /></button>
                <span class="rules"><button aria-label="Even-odd"><Icon name="evenodd" /></button><button class="on" aria-label="Nonzero"><Icon name="nonzero" /></button></span>
              </div>
              <p>Multiple styles</p>
            </div>
            <div class="meter"><label for="blur">Blur (%)</label><input id="blur" value="0,0" /><span class="steps"><button aria-label="Up"></button><button aria-label="Down"></button></span></div>
            <div class="meter green"><label for="opacity">Opacity (%)</label><input id="opacity" value="100,0" /><span class="steps"><button aria-label="Up"></button><button aria-label="Down"></button></span></div>
          </div>
        </section>
        <div class="dots"><i></i></div>
      </aside>

      <div class="sidebar commands">
        <div v-for="(g, i) in commands" :key="i" class="group"><button v-for="n in g" :key="n" :aria-label="n"><Icon :name="n" /></button></div>
      </div>
      <div class="sidebar snaps">
        <div v-for="(g, i) in snaps" :key="i" class="group"><button v-for="n in g" :key="n" :aria-label="n" :class="{ on: pressedSnaps.includes(n) }"><Icon :name="n" /></button></div>
      </div>
    </main>

    <div class="palette">
      <button class="noner" aria-label="No colour"></button>
      <button v-for="(c, i) in palette" :key="i" class="swatch" :aria-label="c" :style="{ background: c }"></button>
      <i class="arrow left"></i>
    </div>
    <div class="scroll horizontal palscroll"><i class="arrow left dim"></i><span class="track"><span class="thumb p1"></span><span class="p2"></span></span><i class="arrow right"></i></div>

    <footer class="status">
      <dl class="style"><dt>Fill:</dt><dd>Different</dd><dt>Stroke:</dt><dd>Different</dd></dl>
      <span class="one">1</span>
      <div class="spinfield"><label for="op">O:</label><span class="spin"><input id="op" value="0" /><span class="steps"><button aria-label="Up"></button><button aria-label="Down"></button></span></span></div>
      <button aria-label="Visible"><Icon name="eye" /></button>
      <button aria-label="Locked"><Icon name="lock" /></button>
      <span class="pick layer"><select aria-label="Layer"><option>•Layer 1</option></select></span>
      <p><b>3</b> objects selected of types <b>Group</b>, <b>Path</b> in layer <b>Layer 1</b>. Click selection to toggle scale/rotation handles.</p>
      <dl class="pointer"><dt>X:</dt><dd>712,89</dd><dt>Y:</dt><dd>-67,84</dd></dl>
      <div class="spinfield zoom"><label for="zm">Z:</label><span class="spin"><input id="zm" value="96%" /><span class="steps"><button aria-label="Up"></button><button aria-label="Down"></button></span></span></div>
    </footer>

    <nav class="taskbar">
      <button class="start"><Icon name="mint" />Menu</button>
      <button class="show" aria-label="Desktop"><Icon name="desktop" /></button>
      <div class="launch"><button aria-label="Files"><Icon name="files" /></button><button aria-label="Terminal"><Icon name="terminal" /></button><button aria-label="Browser"><Icon name="fox" /></button></div>
      <div class="tasks"><button v-for="t in tasks" :key="t.label" :class="{ on: t.active }"><Icon :name="t.icon" /><span>{{ t.label }}</span></button></div>
      <div class="applets"><Icon name="calc" /><Icon name="cup" /></div>
      <svg class="graph" viewBox="0 0 20 10"><rect width="20" height="10" fill="#000" /><path d="M0 10V8H2V9H4V7H5V9H7V8H8V9H10V10H12V8H14V9H15V5H16V8H18V6H19V8H20V10Z" fill="#1d78b8" /></svg>
      <div class="tray"><Icon v-for="t in tray" :key="t" :name="t" /></div>
      <span class="temp">6 °C</span>
      <time>Sun Dec 31, 14:54</time>
    </nav>
  </div>
</template>

<style>
body {
  margin: 0;
  background: #d6d6d6;
}
</style>

<style scoped>
.window {
  display: flex;
  flex-direction: column;
  height: 100vh;
  overflow: hidden;
  background: #d6d6d6;
  color: #333;
  font: 6px/8px "Noto Sans", "Open Sans", sans-serif;
}
.window * { box-sizing: border-box; }
button, input, select { font: inherit; color: inherit; margin: 0; padding: 0; border: 0; background: none; min-width: 0; }
button { display: flex; align-items: center; justify-content: center; }
h1, h2, h3, p, dl, dd { margin: 0; font: inherit; }
.icon { display: block; width: 12px; height: 12px; flex: none; overflow: visible; }

.top { flex: none; background: linear-gradient(#e9e9e9, #d8d8d8 50%, #c3c3c3); border-bottom: 1px solid #b4b4b4; }
.titlebar { display: flex; align-items: center; height: 14px; padding: 0 2px 0 4px; }
.shade { width: 12px; }
.shade::before { content: ""; display: block; width: 0; border: 2px solid transparent; border-top: 3px solid #888; border-bottom: 0; }
h1 { flex: 1; text-align: center; font-size: 7px; font-weight: bold; color: #6a6a6a; }
.winbtns { display: flex; color: #888; font-size: 9px; font-weight: bold; }
.winbtns button { width: 12px; height: 12px; }
.menubar { display: flex; gap: 6px; height: 10px; align-items: center; padding: 0 4px; }
.toolbar { display: flex; align-items: center; height: 21px; padding: 1px 0 0 2px; }
.cmdgroup { display: flex; }
.cmdgroup button { width: 16px; height: 16px; }
.cmdgroup .icon { width: 11px; height: 11px; }
.vsep { width: 1px; height: 12px; background: #adadad; margin: 0 4px; }
.spinfield { display: flex; align-items: center; gap: 3px; margin-right: 4px; }
.spin { display: flex; align-items: center; }
.spin input { width: 25px; height: 11px; border: 1px solid #b2b2b2; border-radius: 1px; background: #f6f6f6; }
.steps { display: flex; flex-direction: column; justify-content: center; gap: 2px; width: 5px; height: 11px; background: #d3d3d3; }
.steps button { width: 5px; height: 3px; }
.steps button::before { content: ""; border: 1px solid transparent; border-bottom: 2px solid #444; border-top: 0; }
.steps button:last-child::before { border-bottom: 0; border-top: 2px solid #444; }
.lock { width: 11px; margin: 0 3px 0 0; }
.lock .icon { width: 9px; height: 9px; }
.toolbar .height { margin-right: 0; }
.pick { position: relative; display: flex; }
.pick select { appearance: none; width: 100%; height: 14px; padding: 0 2px; border: 1px solid #aaa; border-radius: 2px; background: linear-gradient(#f8f8f8, #e2e2e2); }
.pick::after { content: ""; position: absolute; right: 4px; top: 50%; margin-top: -1px; border: 2px solid transparent; border-top: 3px solid #222; border-bottom: 0; pointer-events: none; }
.units { width: 22px; }
.toggles { display: flex; gap: 1px; }
.toggles button { width: 15px; height: 17px; }
.toggles .icon { width: 9px; height: 9px; }
.toggles button, .on { background: #b4b4b4; border: 1px solid #8f8f8f; border-radius: 2px; }

.work { flex: 1; min-height: 0; display: flex; }
.toolbox { width: 20px; padding: 3px 2px; display: grid; grid-auto-rows: 17px 18px; align-content: start; }
.toolbox button { width: 16px; }

.editor { flex: 1; min-width: 0; display: grid; grid-template: 8px 1fr 10px / 9px 1fr 11px; background: #d6d6d6; }
.editor svg { display: block; width: 100%; height: 100%; overflow: hidden; }
.hruler { grid-area: 1 / 2 / 2 / 3; min-width: 0; overflow: hidden; }
.vruler { grid-area: 2 / 1 / 3 / 2; min-height: 0; overflow: hidden; }
.hruler svg, .vruler svg { stroke: #555; font: 5px "DejaVu Sans", sans-serif; }
.hruler text, .vruler text { stroke: none; fill: #555; }
.vruler text { font-size: 4px; }
.edge { stroke: #333; }
.marker { fill: #111; stroke: none; }
.zoomfit { grid-area: 1 / 3; width: 10px; height: 11px; background: #bbb; border: 1px solid #999; z-index: 1; }
.editor .zoomfit .icon { width: 8px; height: 8px; }
.canvas { grid-area: 2 / 2; background: #fff; min-width: 0; min-height: 0; }
.canvas svg { fill: none; font: 5px "DejaVu Sans", sans-serif; }
.canvas text { fill: #111; }
.canvas .big { font-size: 10px; }
.canvas .note { fill: #333; }
.dash { stroke: #444; stroke-dasharray: 2 1.500; }
.soft { stroke: #999; }
.scroll { display: flex; background: #e9e9e9; border: 1px solid #bebebe; align-items: center; }
.scroll .track { flex: 1; display: flex; align-self: stretch; }
.scroll.vertical { grid-area: 2 / 3; flex-direction: column; margin: 5px 1px 0; padding: 3px 0; }
.scroll.vertical .track { flex-direction: column; margin: 3px 0; }
.scroll.horizontal { grid-area: 3 / 2; padding: 0 3px; }
.scroll.horizontal .track { margin: 1px 3px; }
.thumb { background: #dcdcdc; border: 1px solid #a8a8a8; border-radius: 3px; }
.h1 { flex: 195; } .h2 { flex: 467; } .h3 { flex: 65; }
.v1 { flex: 217; } .v2 { flex: 113; } .v3 { flex: 88; }
.p1 { flex: 259; } .p2 { flex: 703; }
.arrow { width: 0; height: 0; border: 3px solid transparent; }
.arrow.left { border-right: 5px solid #111; border-left: 0; }
.arrow.right { border-left: 5px solid #111; border-right: 0; }
.arrow.up { border-bottom: 4px solid #111; border-top: 0; }
.arrow.down { border-top: 4px solid #111; border-bottom: 0; }
.arrow.dim { border-right-color: #aaa; }

.grip { width: 4px; display: flex; align-items: center; justify-content: center; }
.grip i { width: 2px; height: 12px; background: repeating-linear-gradient(#999 0 1px, transparent 1px 3px); }
.dock { width: 156px; border: 1px solid #b0b0b0; border-top: 0; padding: 0 1px; }
.panel h2 { display: flex; align-items: center; gap: 1px; height: 15px; padding-right: 2px; }
.panel h2 .icon { width: 8px; height: 8px; }
.panel h2 span { flex: 1; white-space: nowrap; }
.panel h2 button { width: 6px; height: 6px; border: 1px solid #888; border-radius: 1px; font-size: 5px; margin-left: 5px; }
.body { border: 1px solid #ababab; }
.align { padding: 1px 2px 1px 3px; }
h3 { font-weight: bold; height: 8px; color: #222; }
.row { display: flex; align-items: center; justify-content: flex-end; gap: 2px; }
.relative { height: 19px; }
.relative .pick { width: 60px; }
.relative .pick select { height: 15px; }
.treat { height: 9px; }
.treat input { appearance: none; width: 7px; height: 7px; margin: 0 1px 0 2px; background: #fafafa; border: 1px solid #bbb; border-radius: 1px; }
.iconset { display: grid; grid-template-columns: 18px 17px 18px 18px 17px 18px; grid-auto-rows: 18px; justify-content: end; padding: 2px 0 3px; }
.iconset + h3 { margin-top: 1px; }
.overlaps { height: 16px; padding: 0 1px 0 0; margin-top: 3px; }
.overlaps .spin input { width: 25px; height: 13px; padding-left: 2px; }
.overlaps .spinfield { gap: 2px; margin-right: 3px; }
.dots { height: 6px; display: flex; align-items: center; justify-content: center; }
.dots i { width: 14px; height: 2px; background: repeating-linear-gradient(90deg, #999 0 1px, transparent 1px 3px); }

.fill { padding: 0 2px 2px 1px; }
.tabs { display: flex; align-items: flex-end; height: 14px; gap: 1px; }
.tabs button { height: 12px; gap: 2px; padding: 0 2px; background: #cfcfcf; border: 1px solid #b0b0b0; border-bottom: 0; border-radius: 2px 2px 0 0; }
.tabs .on { height: 14px; background: #ececec; }
.tabs .icon { width: 7px; height: 7px; }
.page { height: 117px; background: #ececec; border: 1px solid #b0b0b0; padding: 4px 1px 3px 3px; }
.page p { font-weight: bold; color: #222; margin: 5px 1px; }
.paints { display: flex; align-items: center; }
.paints > button { width: 16px; height: 16px; }
.paints .rules { display: flex; margin-left: auto; }
.rules button { width: 11px; height: 16px; }
.rules .icon { width: 9px; height: 9px; }
.meter { display: flex; align-items: center; height: 14px; margin-top: 2px; border: 1px solid #b0b0b0; background: #f2f2f2; padding-left: 2px; }
.meter input { flex: 1; text-align: right; padding-right: 2px; }
.meter.green { background: #d0dcc4; }
.meter .steps { align-self: stretch; height: auto; border-left: 1px solid #bbb; background: #e2e2e2; width: 6px; }

.sidebar { width: 20px; padding-top: 2px; }
.sidebar .group { display: grid; justify-items: center; }
.commands { width: 22px; }
.snaps { width: 18px; margin-right: 1px; }
.commands .group { grid-auto-rows: 18px 17px 18px; }
.commands .icon { width: 11px; height: 11px; }
.snaps .group { grid-auto-rows: 15px 16px; }
.snaps button { width: 13px; height: 15px; }
.snaps .icon { width: 10px; height: 10px; }
.sidebar .group + .group::before { content: ""; width: 10px; height: 1px; background: #bcbcbc; align-self: center; }
.sidebar .group + .group { grid-template-rows: 6px; }

.palette { flex: none; display: flex; height: 10px; border-top: 1px solid #aaa; border-bottom: 1px solid #999; align-items: stretch; }
.swatch { flex: 1; }
.noner { width: 9px; background: linear-gradient(45deg, transparent 45%, #a22 45% 55%, transparent 55%), linear-gradient(-45deg, #fff 45%, #a22 45% 55%, #fff 55%); }
.palette .arrow { margin: 1px 0 0 2px; }
.palscroll { flex: none; height: 9px; }

.status { flex: none; display: flex; align-items: center; height: 14px; padding-left: 1px; }
dl { display: grid; grid-template-columns: auto auto; line-height: 7px; }
.style { width: 53px; grid-template-columns: 25px 28px; }
.style dt, .style dd { white-space: nowrap; }
.style dd { text-align: right; padding-right: 1px; }
.one { align-self: flex-end; padding: 0 2px 0 5px; }
.status .spinfield { gap: 2px; margin-right: 2px; }
.status .spin input { width: 18px; padding-left: 1px; }
.status > button { width: 12px; }
.status > button .icon { width: 8px; height: 8px; }
.layer { width: 41px; margin: 0 3px 0 1px; }
.layer select { height: 13px; font-weight: bold; }
.status p { flex: 1; white-space: nowrap; }
.pointer { grid-template-columns: 8px 20px; margin-right: 4px; }
.pointer dd { text-align: right; font-family: "DejaVu Sans Mono", monospace; font-size: 5px; }
.status .zoom { margin-right: 11px; }
.status .zoom input { width: 21px; text-align: center; }

.taskbar { flex: none; display: flex; align-items: center; height: 13px; border-top: 1px solid #aaa; background: linear-gradient(#dcdcdc, #cfcfcf); padding: 0 2px 0 5px; white-space: nowrap; }
.taskbar .icon { width: 9px; height: 9px; }
.start { gap: 3px; width: 34px; justify-content: flex-start; }
.show { width: 12px; }
.launch { display: flex; gap: 4px; margin: 0 6px 0 7px; }
.tasks { flex: 1; display: flex; gap: 1px; }
.tasks button { flex: 0 1 88px; height: 11px; justify-content: flex-start; gap: 4px; padding: 0 2px; background: linear-gradient(#ededed, #d8d8d8); border: 1px solid #b0b0b0; border-radius: 1px; }
.tasks .on { background: #b7b7b7; border-color: #999; }
.applets { display: flex; gap: 3px; margin-right: 14px; }
.graph { width: 20px; height: 10px; margin-right: 10px; }
.tray { display: flex; gap: 4px; margin-right: 3px; }
.temp { margin-right: 8px; }
</style>
